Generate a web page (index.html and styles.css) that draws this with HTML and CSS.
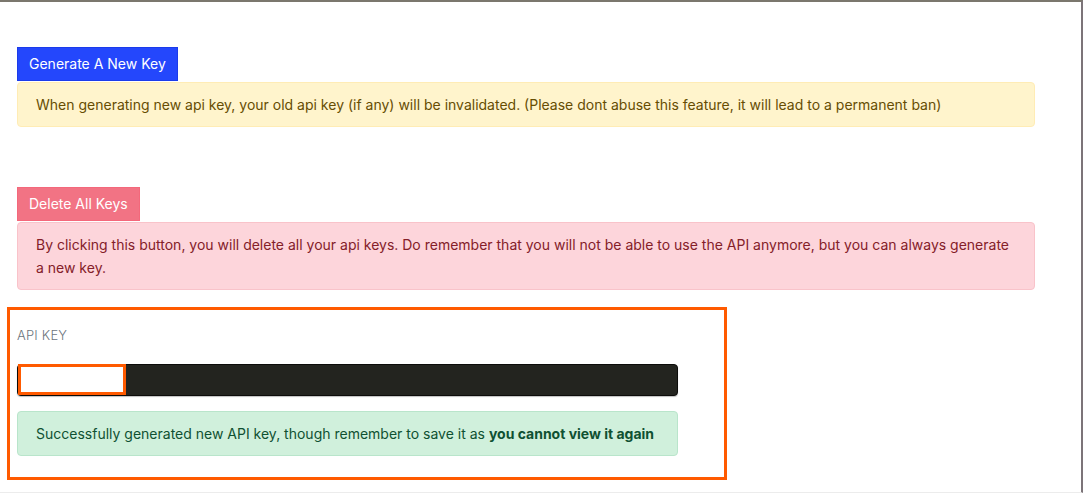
FILE: index.html
```html
<!DOCTYPE html>
<html lang="en">
<head>
<meta charset="utf-8">
<title>API Keys</title>
<link rel="stylesheet" href="styles.css">
</head>
<body>
<div class="frame">
  <div class="page">
    <section class="block block-generate">
      <button class="btn btn-primary" type="button">Generate A New Key</button>
      <div class="alert alert-warning">When generating new api key, your old api key (if any) will be invalidated. (Please dont abuse this feature, it will lead to a permanent ban)</div>
    </section>
    <section class="block block-delete">
      <button class="btn btn-danger" type="button">Delete All Keys</button>
      <div class="alert alert-danger">By clicking this button, you will delete all your api keys. Do remember that you will not be able to use the API anymore, but you can always generate a new key.</div>
    </section>
    <section class="keybox">
      <div class="key-label">API KEY</div>
      <div class="key-field">
        <input class="key-input" type="text" readonly value="">
        <span class="redact"></span>
      </div>
      <div class="alert alert-success key-alert">Successfully generated new API key, though remember to save it as <strong>you cannot view it again</strong></div>
    </section>
  </div>
</div>
</body>
</html>
```

FILE: styles.css
```css
* { box-sizing: border-box; }
html, body { margin: 0; padding: 0; background: #fff; }
body {
  font-family: "Inter", "Liberation Sans", Arial, sans-serif;
  font-size: 14px;
  color: #212529;
}
.frame {
  width: 1083px;
  height: 493px;
  border-top: 2px solid #7b776d;
  border-right: 2px solid #7c7479;
  border-bottom: 1px solid #ececec;
  overflow: hidden;
}
.page {
  padding: 45px 46px 0 17px;
  display: flex;
  flex-direction: column;
}
.block { display: flex; flex-direction: column; align-items: flex-start; }
.block-delete { margin-top: 60px; }
.btn {
  font-family: inherit;
  font-size: 14px;
  line-height: 20px;
  color: #fff;
  padding: 6px 11px;
  height: 34px;
  border-radius: 0;
  cursor: pointer;
}
.btn-primary { background: #2447fc; border: 1px solid #1b3bea; }
.btn-danger { background: #f27384; border: 1px solid #f4687b; }
.alert {
  width: 100%;
  margin-top: 1px;
  padding: 10px 18px;
  line-height: 23px;
  border: 1px solid transparent;
  border-radius: 4px;
}
.alert-warning { background: #fff4cc; border-color: #ffecb5; color: #664d03; }
.alert-danger { background: #fdd5db; border-color: #f9c3ca; color: #842029; }
.alert-success { background: #d0f0dc; border-color: #b9e5cb; color: #0f5132; }
.alert-success strong { font-weight: 700; }
.keybox {
  margin-top: 17px;
  margin-left: -10px;
  width: 720px;
  height: 173px;
  border: 3px solid #ff5a00;
  padding: 16px 46px 0 7px;
}
.key-label {
  color: #6c757d;
  font-size: 13px;
  font-weight: 300;
  line-height: 18px;
  letter-spacing: 0.2px;
}
.key-field {
  position: relative;
  margin-top: 20px;
  height: 32px;
}
.key-input {
  display: block;
  width: 661px;
  height: 32px;
  margin: 0;
  background: #23241f;
  border: 1px solid #0c0c0a;
  border-radius: 4px;
  box-shadow: 0 1px 1px rgba(0,0,0,0.25);
  outline: none;
}
.redact {
  position: absolute;
  left: 1px;
  top: 0;
  width: 108px;
  height: 31px;
  background: #fff;
  border: 3px solid #ff5a00;
}
.key-alert {
  width: 661px;
  margin-top: 15px;
  padding: 10px 18px;
}
```
